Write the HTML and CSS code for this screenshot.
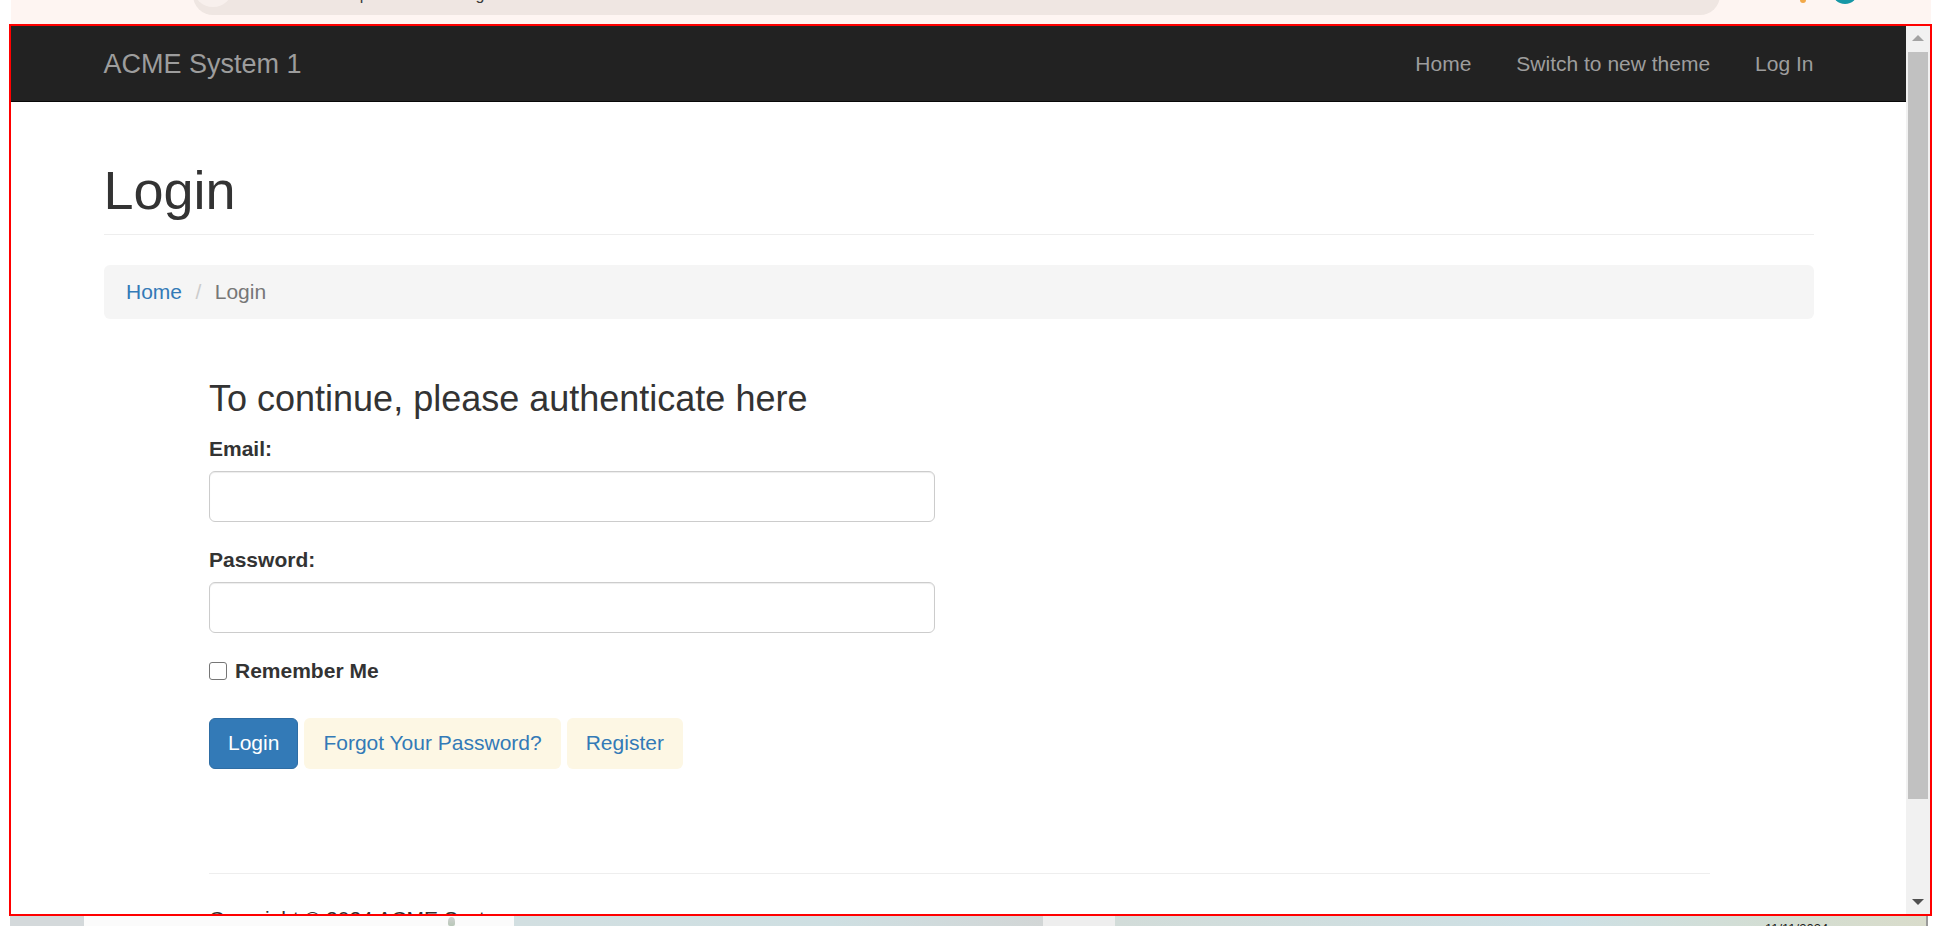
FILE: index.html
```html
<!DOCTYPE html>
<html lang="en">
<head>
<meta charset="utf-8">
<title>Login - ACME System 1</title>
<link rel="stylesheet" href="styles.css">
</head>
<body>
<div class="chrome">
  <div class="omnibox">
    <span class="site-chip"></span>
    <span class="url">https://localhost/Login</span>
  </div>
  <div class="chrome-icons">
    <span class="ext-icon"></span>
    <span class="avatar"></span>
  </div>
</div>

<div class="frame">
  <div class="page">
    <nav class="navbar">
      <div class="container navbar-inner">
        <a class="brand" href="#">ACME System 1</a>
        <ul class="nav">
          <li><a href="#">Home</a></li>
          <li><a href="#">Switch to new theme</a></li>
          <li><a href="#">Log In</a></li>
        </ul>
      </div>
    </nav>

    <main class="container">
      <div class="page-header"><h1>Login</h1></div>
      <ol class="breadcrumb">
        <li><a href="#">Home</a></li>
        <li class="active">Login</li>
      </ol>

      <div class="inner">
        <form class="login-form">
          <h3>To continue, please authenticate here</h3>
          <div class="form-group">
            <label class="field-label">Email:</label>
            <input class="form-control" type="text">
          </div>
          <div class="form-group">
            <label class="field-label">Password:</label>
            <input class="form-control" type="password">
          </div>
          <div class="remember">
            <input class="check" type="checkbox" id="rm">
            <label class="remember-label" for="rm">Remember Me</label>
          </div>
          <div class="actions">
            <button class="btn btn-primary" type="button">Login</button>
            <a class="btn btn-soft" href="#">Forgot Your Password?</a>
            <a class="btn btn-soft" href="#">Register</a>
          </div>
        </form>
        <footer class="footer">
          <hr class="footer-rule">
          <p class="copyright">Copyright © 2024 ACME System</p>
        </footer>
      </div>
    </main>
  </div>
  <div class="scrollbar">
    <div class="sb-btn"><span class="arrow-up"></span></div>
    <div class="thumb"></div>
    <div class="sb-space"></div>
    <div class="sb-btn"><span class="arrow-down"></span></div>
  </div>
</div>

<div class="taskbar">
  <div class="seg seg1"></div>
  <div class="seg seg2"><span class="tray-dot"></span></div>
  <div class="seg seg3"></div>
  <div class="seg seg4"></div>
  <div class="seg seg5"><span class="clock">11/11/2024</span></div>
  <div class="seg vline"></div>
</div>
</body>
</html>
```

FILE: styles.css
```css
html, body {
  margin: 0;
  padding: 0;
}

body {
  width: 1942px;
  height: 940px;
  overflow: hidden;
  background: #ffffff;
  font-family: "Liberation Sans", Arial, Helvetica, sans-serif;
}

/* ---------- browser strip on top ---------- */
.chrome {
  display: flex;
  height: 24px;
  width: 1920px;
  margin-left: 11px;
  background: #fef5f2;
  overflow: hidden;
}

.omnibox {
  display: flex;
  align-items: flex-start;
  width: 1527px;
  height: 40px;
  margin-left: 182px;
  margin-top: -25px;
  border-radius: 20px;
  background: #efe6e2;
}

.site-chip {
  width: 40px;
  height: 40px;
  margin-top: -8px;
  border-radius: 50%;
  background: #f8f0ed;
}

.url {
  margin-left: 109px;
  margin-top: 12px;
  font-size: 16px;
  line-height: 16px;
  color: #3a3a3a;
  white-space: nowrap;
}

.chrome-icons {
  display: flex;
  align-items: flex-start;
  margin-left: 80px;
}

.ext-icon {
  width: 6px;
  height: 3px;
  border-radius: 0 0 3px 3px;
  background: #f2a94a;
}

.avatar {
  width: 26px;
  height: 26px;
  margin-left: 26px;
  margin-top: -22px;
  border-radius: 50%;
  background: #1697a6;
}

/* ---------- red capture frame ---------- */
.frame {
  display: flex;
  width: 1919px;
  height: 888px;
  margin-left: 9px;
  border: 2px solid #ff0000;
}

.page {
  width: 1895px;
  height: 888px;
  overflow: hidden;
  background: #ffffff;
  color: #333333;
}

.container {
  width: 1710px;
  margin: 0 auto;
}

/* ---------- navbar ---------- */
.navbar {
  height: 75px;
  background: #222222;
  border-bottom: 1px solid #080808;
}

.navbar-inner {
  display: flex;
  align-items: center;
  justify-content: space-between;
  height: 100%;
}

.brand {
  font-size: 27px;
  line-height: 30px;
  color: #9d9d9d;
  text-decoration: none;
}

.nav {
  display: flex;
  gap: 45px;
  margin: 0;
  padding: 0;
  list-style: none;
}

.nav a {
  font-size: 21px;
  line-height: 30px;
  color: #9d9d9d;
  text-decoration: none;
}

/* ---------- page header ---------- */
.page-header {
  margin: 59px 0 30px;
  padding-bottom: 13.5px;
  border-bottom: 1px solid #eeeeee;
}

.page-header h1 {
  margin: 0;
  font-size: 54px;
  font-weight: 500;
  line-height: 59.4px;
  color: #333333;
}

/* ---------- breadcrumb ---------- */
.breadcrumb {
  display: flex;
  margin: 0 0 30px;
  padding: 12px 22.5px;
  list-style: none;
  background: #f5f5f5;
  border-radius: 6px;
  font-size: 21px;
  line-height: 30px;
}

.breadcrumb a {
  color: #337ab7;
  text-decoration: none;
}

.breadcrumb li + li {
  margin-left: 6px;
}

.breadcrumb li + li::before {
  content: "/\00a0";
  padding: 0 7.5px;
  color: #cccccc;
}

.breadcrumb .active {
  color: #777777;
}

/* ---------- login form ---------- */
.inner {
  width: 1501px;
  margin-left: 105.5px;
}

.login-form {
  display: flow-root;
  width: 726px;
}

.login-form h3 {
  margin: 30px 0 15px;
  font-size: 36px;
  font-weight: 500;
  line-height: 39.6px;
  color: #333333;
}

.form-group {
  margin-bottom: 22.5px;
}

.field-label {
  display: block;
  margin-bottom: 7.5px;
  font-size: 21px;
  font-weight: bold;
  line-height: 30px;
}

.form-control {
  display: block;
  box-sizing: border-box;
  width: 100%;
  height: 51px;
  margin: 0;
  padding: 9px 18px;
  border: 1px solid #cccccc;
  border-radius: 6px;
  background: #ffffff;
  box-shadow: inset 0 1px 1px rgba(0, 0, 0, 0.075);
  font-family: inherit;
  font-size: 21px;
}

.remember {
  display: flex;
  align-items: center;
  gap: 8px;
  height: 30px;
  margin-bottom: 32px;
}

.check {
  -webkit-appearance: none;
  appearance: none;
  box-sizing: border-box;
  width: 18px;
  height: 18px;
  margin: 0;
  border: 1.5px solid #767676;
  border-radius: 3px;
  background: #ffffff;
}

.remember-label {
  font-size: 21px;
  font-weight: bold;
  line-height: 30px;
}

.actions {
  display: flex;
  gap: 6px;
}

.btn {
  display: flex;
  align-items: center;
  box-sizing: border-box;
  height: 51px;
  padding: 0 18px;
  border: 1px solid transparent;
  border-radius: 6px;
  font-family: inherit;
  font-size: 21px;
  line-height: 30px;
  text-decoration: none;
  cursor: pointer;
}

.btn-primary {
  background: #337ab7;
  border-color: #2e6da4;
  color: #ffffff;
}

.btn-soft {
  background: #fdf7e4;
  color: #337ab7;
}

/* ---------- footer ---------- */
.footer {
  margin-top: 104px;
}

.footer-rule {
  margin: 0 0 30px;
  border: 0;
  border-top: 1px solid #eeeeee;
}

.copyright {
  margin: 0;
  font-size: 21px;
  line-height: 30px;
  color: #333333;
}

/* ---------- scrollbar ---------- */
.scrollbar {
  display: flex;
  flex-direction: column;
  align-items: center;
  width: 24px;
  background: #f1f1f1;
}

.sb-btn {
  display: flex;
  align-items: center;
  justify-content: center;
  width: 24px;
  height: 24px;
}

.arrow-up {
  width: 0;
  height: 0;
  border-left: 6px solid transparent;
  border-right: 6px solid transparent;
  border-bottom: 6px solid #a3a3a3;
}

.arrow-down {
  width: 0;
  height: 0;
  border-left: 6px solid transparent;
  border-right: 6px solid transparent;
  border-top: 6px solid #505050;
}

.thumb {
  width: 20px;
  height: 747px;
  margin-top: 2px;
  background: #c1c1c1;
}

.sb-space {
  flex: 1;
}

/* ---------- strip below the frame ---------- */
.taskbar {
  display: flex;
  width: 1918px;
  height: 10px;
  margin-left: 10px;
  overflow: hidden;
}

.seg {
  height: 10px;
}

.seg1 {
  width: 74px;
  background: #d4d9db;
}

.seg2 {
  position: relative;
  width: 430px;
  background: #fbfbfb;
}

.tray-dot {
  position: absolute;
  left: 364px;
  top: 1px;
  width: 7px;
  height: 9px;
  border-radius: 50% 50% 2px 2px;
  background: linear-gradient(#d0d0d0, #b8c8b8);
}

.seg3 {
  width: 529px;
  background: linear-gradient(90deg, #d2dfe1, #cedfe2 60%, #d2d6d6);
}

.seg4 {
  width: 72px;
  background: #eeeeee;
}

.seg5 {
  flex: 1;
  position: relative;
  background: linear-gradient(90deg, #d2dcd9, #cde0e5 55%, #d4ddd0 85%, #d9dccb);
}

.clock {
  position: absolute;
  left: 650px;
  top: 6px;
  font-size: 13px;
  line-height: 13px;
  color: #222222;
  white-space: nowrap;
}

.vline {
  width: 2px;
  background: #9a9a9a;
}
```
